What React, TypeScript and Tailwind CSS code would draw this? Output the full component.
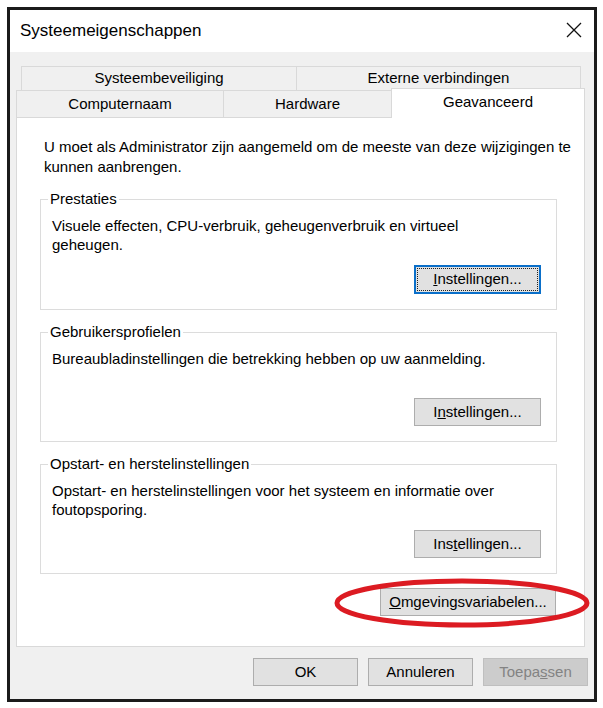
import React from "react"

const font = { fontFamily: '"Liberation Sans", Arial, sans-serif' }

function Tab({ label, width, selected = false }: { label: string; width: string; selected?: boolean }) {
  if (selected) {
    return (
      <div
        className={`relative z-10 -mb-px flex h-[30px] items-center justify-center border border-b-0 border-[#d9d9d9] bg-white pb-[3px] text-[15px] text-black ${width}`}
      >
        {label}
      </div>
    )
  }
  return (
    <div
      className={`flex h-full items-center justify-center border border-b-0 border-r-0 border-[#d9d9d9] bg-[#f0f0f0] text-[15px] text-black last:border-r ${width}`}
    >
      {label}
    </div>
  )
}

function WinButton({
  children,
  width,
  focused = false,
  disabled = false,
}: {
  children: React.ReactNode
  width: string
  focused?: boolean
  disabled?: boolean
}) {
  if (focused) {
    return (
      <div className={`flex h-[29px] border-2 border-[#0a6fc9] bg-[#e1e1e1] p-px ${width}`}>
        <div className="flex flex-1 items-center justify-center border border-dotted border-[#222] text-[15px] text-black">
          {children}
        </div>
      </div>
    )
  }
  return (
    <div
      className={`flex h-[28px] items-center justify-center border text-[15px] ${
        disabled ? "border-[#bfbfbf] bg-[#cccccc] text-[#838383]" : "border-[#adadad] bg-[#e1e1e1] text-black"
      } ${width}`}
    >
      {children}
    </div>
  )
}

function GroupBox({
  title,
  lines,
  button,
}: {
  title: string
  lines: string[]
  button: React.ReactNode
}) {
  return (
    <fieldset className="ml-[23px] w-[517px] border border-[#dcdcdc] pb-[15px] pl-[11px] pr-[15px]">
      <legend className="-ml-[4px] px-[2px] text-[15px] leading-[20px] text-black">{title}</legend>
      <div className="min-h-[45px] pt-[7px] text-[15px] leading-[19px] text-black">
        {lines.map((l) => (
          <div key={l}>{l}</div>
        ))}
      </div>
      <div className="mt-[11px] flex justify-end">{button}</div>
    </fieldset>
  )
}

export default function App() {
  return (
    <div className="h-[708px] w-[603px] bg-white pl-[7px] pt-[7px]" style={font}>
      <div className="flex h-[695px] w-[590px] flex-col border-[3px] border-[#1b1b1b] bg-[#f0f0f0]">
        {/* title bar */}
        <div className="flex h-[42px] items-center justify-between bg-white pl-[10px] pr-[12px]">
          <span className="text-[17px] text-black">Systeemeigenschappen</span>
          <svg width="16" height="16" viewBox="0 0 16 16" className="mb-[2px]">
            <path d="M1 1 L15 15 M15 1 L1 15" stroke="#111" strokeWidth="1.3" fill="none" />
          </svg>
        </div>

        <div className="flex flex-1 flex-col px-[6px] pt-[14px]">
          {/* tabs */}
          <div className="ml-[5px] flex h-[24px] w-[560px]">
            <Tab label="Systeembeveiliging" width="w-[275px]" />
            <Tab label="Externe verbindingen" width="w-[285px]" />
          </div>
          <div className="flex h-[27px] items-end">
            <Tab label="Computernaam" width="w-[207px]" />
            <Tab label="Hardware" width="w-[168px]" />
            <Tab label="Geavanceerd" width="w-[194px]" selected />
          </div>

          {/* panel */}
          <div className="relative flex h-[530px] w-[569px] flex-col border border-[#d9d9d9] bg-white pt-[19px]">
            <p className="pl-[27px] text-[15px] leading-[20px] text-black">
              U moet als Administrator zijn aangemeld om de meeste van deze wijzigingen te
              <br />
              kunnen aanbrengen.
            </p>

            <div className="mt-[12px] flex flex-col gap-[12px]">
              <GroupBox
                title="Prestaties"
                lines={["Visuele effecten, CPU-verbruik, geheugenverbruik en virtueel", "geheugen."]}
                button={
                  <WinButton width="w-[127px]" focused>
                    <span className="underline">I</span>nstellingen...
                  </WinButton>
                }
              />
              <GroupBox
                title="Gebruikersprofielen"
                lines={["Bureaubladinstellingen die betrekking hebben op uw aanmelding."]}
                button={
                  <WinButton width="w-[127px]">
                    I<span className="underline">n</span>stellingen...
                  </WinButton>
                }
              />
              <GroupBox
                title="Opstart- en herstelinstellingen"
                lines={["Opstart- en herstelinstellingen voor het systeem en informatie over", "foutopsporing."]}
                button={
                  <WinButton width="w-[127px]">
                    Ins<span className="underline">t</span>ellingen...
                  </WinButton>
                }
              />
            </div>

            <div className="mr-[28px] mt-[14px] flex justify-end">
              <WinButton width="w-[176px]">
                <span className="underline">O</span>mgevingsvariabelen...
              </WinButton>
            </div>

            {/* red annotation ellipse */}
            <svg
              className="pointer-events-none absolute left-[315px] top-[458px]"
              width="260"
              height="54"
              viewBox="0 0 260 54"
            >
              <ellipse cx="130" cy="27" rx="125" ry="22" fill="none" stroke="#dc1b22" strokeWidth="5" />
            </svg>
          </div>

          {/* bottom buttons */}
          <div className="mt-[11px] flex justify-end gap-[10px]">
            <WinButton width="w-[105px]">OK</WinButton>
            <WinButton width="w-[105px]">Annuleren</WinButton>
            <WinButton width="w-[105px]" disabled>
              Toepa<span className="underline">s</span>sen
            </WinButton>
          </div>
        </div>
      </div>
    </div>
  )
}
